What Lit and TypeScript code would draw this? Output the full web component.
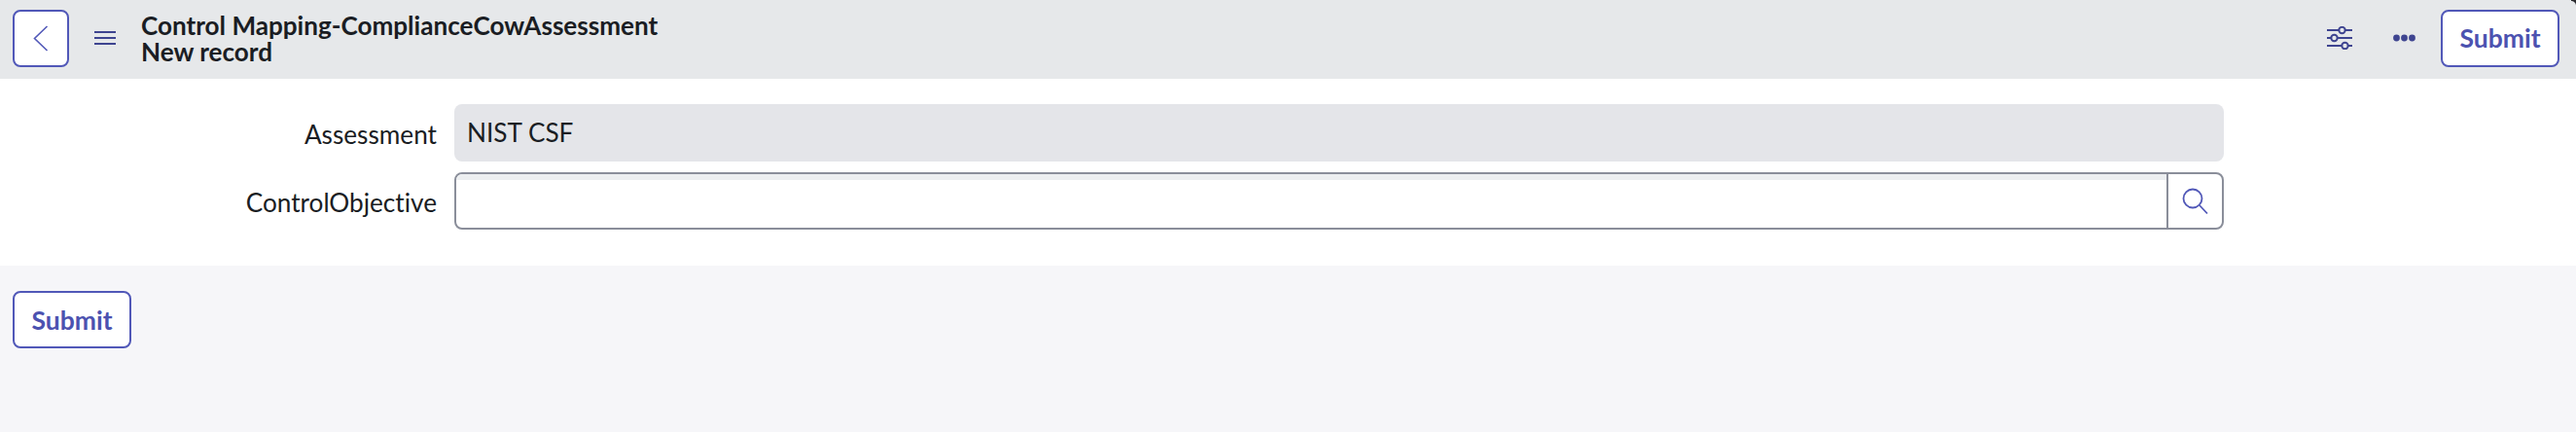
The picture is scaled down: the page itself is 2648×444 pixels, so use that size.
import { LitElement, html, css } from "lit";
import { customElement } from "lit/decorators.js";

@customElement("app-root")
export class AppRoot extends LitElement {
  static styles = css`
    :host { display: block; position: relative; width: 2648px; height: 444px; background: #f6f6f9; font-family: Lato, sans-serif; font-variant-ligatures: none; color: #1a1d23; overflow: hidden; }
    .corner { position: absolute; top: 0; right: 0; width: 5px; height: 6px; background: radial-gradient(circle at 0 100%, transparent 4.5px, #2a2a2e 5.5px); }
    .hdr { height: 81px; box-sizing: border-box; background: #e6e8ea; display: flex; align-items: center; padding: 0 17px 3px 13px; }
    .btn { box-sizing: border-box; flex: none; background: #fff; border: 2px solid #5158b8; border-radius: 8px; color: #4c52b0; font: 700 26.5px/1 Lato, sans-serif; height: 59px; display: flex; align-items: center; justify-content: center; }
    .back { width: 58px; }
    .menu { margin-left: 26px; width: 22px; height: 16px; display: block; flex: none; }
    .title { margin: 2px 0 0 26px; font-weight: 700; font-size: 26.1px; line-height: 27px; }
    .spacer { flex: 1; }
    .tune { width: 26px; height: 24px; display: block; flex: none; }
    .dots { margin-left: 42px; width: 23px; height: 8px; display: block; flex: none; }
    .sub-top { margin-left: 26px; width: 122px; }
    .form { background: #fff; height: 192px; box-sizing: border-box; padding-top: 26px; display: flex; flex-direction: column; gap: 11px; }
    .row { display: flex; align-items: center; height: 59px; }
    .lbl { width: 449px; text-align: right; font-size: 26.2px; padding-top: 2px; }
    .val { margin-left: 18px; width: 1819px; height: 59px; box-sizing: border-box; background: #e4e5e9; border-radius: 8px; padding: 0 13px 1px; display: flex; align-items: center; font-size: 26.2px; }
    .group { margin-left: 18px; width: 1819px; height: 59px; box-sizing: border-box; border: 2px solid #8a8e9a; border-radius: 8px; display: flex; overflow: hidden; background: #fff; }
    .inp { flex: 1; box-shadow: inset 0 6px 0 0 #eceef0; }
    .search { width: 57px; border-left: 2px solid #8a8e9a; box-sizing: border-box; display: flex; align-items: center; justify-content: center; }
    .search svg { width: 28px; height: 28px; display: block; }
    .foot { padding: 26px 0 0 13px; }
    .sub-foot { width: 122px; padding-top: 2px; }
  `;
  render() {
    return html`
      <div class="hdr">
        <div class="btn back">
          <svg width="16" height="27" viewBox="0 0 16 27" fill="none" stroke="#5158b8" stroke-width="1.6"><path d="M14.5 1 1.5 13.5 14.5 26"/></svg>
        </div>
        <svg class="menu" viewBox="0 0 22 16" stroke="#3e4490" stroke-width="2.2"><path d="M0 2h22M0 8h22M0 14h22"/></svg>
        <div class="title">Control Mapping-ComplianceCowAssessment<br />New record</div>
        <div class="spacer"></div>
        <svg class="tune" viewBox="0 0 26 24" fill="none" stroke="#3e4490" stroke-width="2">
          <path d="M0 4h12M19 4h7M0 12h4M11 12h15M0 20h15M22 20h4"/>
          <circle cx="15.5" cy="4" r="3.2"/><circle cx="7.5" cy="12" r="3.2"/><circle cx="18.5" cy="20" r="3.2"/>
        </svg>
        <svg class="dots" viewBox="0 0 23 8" fill="#3e4490"><circle cx="3.5" cy="4" r="3.4"/><circle cx="11.5" cy="4" r="3.4"/><circle cx="19.5" cy="4" r="3.4"/></svg>
        <div class="btn sub-top">Submit</div>
      </div>
      <div class="form">
        <div class="row"><div class="lbl">Assessment</div><div class="val">NIST CSF</div></div>
        <div class="row"><div class="lbl">ControlObjective</div>
          <div class="group"><div class="inp"></div>
            <div class="search"><svg viewBox="0 0 28 28" fill="none" stroke="#5158b8" stroke-width="1.8"><circle cx="11" cy="11" r="9.5"/><path d="M18 18l8 8.5"/></svg></div>
          </div>
        </div>
      </div>
      <div class="foot"><div class="btn sub-foot">Submit</div></div>
      <div class="corner"></div>
    `;
  }
}
